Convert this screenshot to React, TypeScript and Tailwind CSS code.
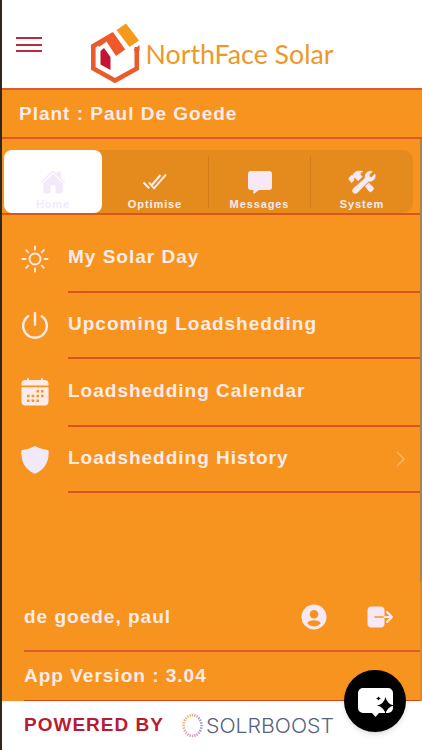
import type { ReactNode } from 'react'
import clsx from 'clsx'

interface IconProps {
  className?: string
}

const Logo = () => (
  <svg className="mt-[22px] ml-[46px] h-[62px] w-[270px] tracking-normal" viewBox="0 0 270 62">
    <path d="M25 12.500 L5.300 24 V46.500 L27 58.500 L48.800 46.500 V25" fill="none" stroke="#e95b2b" strokeWidth="4.600" />
    <path d="M10 22 L25 10 L37.200 27.500 L28 34 L18.500 19.500 L11 25 Z" fill="#f05a28" />
    <path d="M12.500 29 L16 26 L22.500 35 V48 L12.500 42.500 Z" fill="#c31432" />
    <path d="M46 27.500 L51.500 23 V29 H46 Z" fill="#e95b2b" />
    <path d="M28.500 8 L38 1.500 L51 18.500 L41.500 25 Z" fill="#f79a1c" />
    <text x="57.500" y="42" textLength="188" lengthAdjust="spacingAndGlyphs" fontFamily="Lato, sans-serif" fontWeight="400" fontSize="26.500" fill="#ed9929">
      NorthFace Solar
    </text>
  </svg>
)

const HomeIcon = ({ className }: IconProps) => (
  <svg className={className} viewBox="0 0 512 512" fill="currentColor">
    <path d="M261.600 101.100a8 8 0 0 0-11 0L66.400 277.200a8 8 0 0 0-2.400 5.700L64 448a32 32 0 0 0 32 32h96a16 16 0 0 0 16-16V328a8 8 0 0 1 8-8h80a8 8 0 0 1 8 8v136a16 16 0 0 0 16 16h96a32 32 0 0 0 32-32V282.900a8 8 0 0 0-2.500-5.700Z" />
    <path d="m491 244-75-71.600V64a16 16 0 0 0-16-16h-48a16 16 0 0 0-16 16v32l-57.900-55.400C272.800 35.100 264.700 32 256 32s-16.700 3.100-22.100 8.600L21.200 244c-6.200 6-7 15.900-1.200 22.200a16 16 0 0 0 22.700.6L250.500 68.200a8 8 0 0 1 11 0l207.900 198.700a16 16 0 0 0 22.600-.5c6.100-6.300 5.600-16.300-1-22.400Z" />
  </svg>
)

const DoubleCheckIcon = ({ className }: IconProps) => (
  <svg className={className} viewBox="0 0 26 20" fill="none" stroke="currentColor" strokeWidth="2">
    <path d="m1.500 10.500 5.700 5.800M9.500 13.500l9-10.500M7 10.500l5 5.800L24 2.500" />
  </svg>
)

const ChatIcon = ({ className }: IconProps) => (
  <svg className={className} viewBox="0 0 26 26" fill="currentColor">
    <path d="M4 2h18a3 3 0 0 1 3 3v13a3 3 0 0 1-3 3H12l-4.500 3.600c-.6.500-1.200.1-1.200-.6v-3H4a3 3 0 0 1-3-3V5a3 3 0 0 1 3-3Z" />
  </svg>
)

const ToolsIcon = ({ className }: IconProps) => (
  <svg className={className} viewBox="0 0 28 24" fill="currentColor" stroke="currentColor" strokeWidth=".6" strokeLinejoin="round">
    <path d="M.5 8.800 3 5.500l1.500.3C6 1.700 10 .2 15 1.500c-2 .7-3 1.700-2.700 3.200l1.900 2-4.200 4-2.600-2.700c-1-.4-1.600.1-1.900.8l.3 1.700-2.300 2.200Z" />
    <path d="m24.300 1.500-3.200 3.300.5 2 2 .6L27 4c1 3.500-1 7.200-5 7.200-1.200 0-2 .4-2.700 1.200l-9.800 10c-1.400 1.400-3.500 1.200-4.400 0-1-1.300-.6-2.900.5-4L16.300 9c.7-.6 1-1.400.9-2.300C17 3 20.500.2 24.300 1.500Z" />
    <path d="m17.300 16.200 3.300-3.300 4.200 4.200c1 .9 1 2 .2 2.900l-1.300 1.300c-.8.8-1.900.7-2.700-.1Z" />
  </svg>
)

const SunIcon = ({ className }: IconProps) => (
  <svg className={className} viewBox="0 0 28 28" fill="none" stroke="currentColor" strokeWidth="1.900" strokeLinecap="round">
    <circle cx="14" cy="14" r="5.500" />
    <path d="M14 1.500v3M14 23.500v3M1.500 14h3M23.500 14h3M5.200 5.200l2.100 2.100M20.700 20.700l2.100 2.100M5.200 22.800l2.100-2.100M20.700 7.300l2.100-2.100" />
  </svg>
)

const PowerIcon = ({ className }: IconProps) => (
  <svg className={className} viewBox="0 0 28 28" fill="none" stroke="currentColor" strokeWidth="2.400" strokeLinecap="round">
    <path d="M20.800 5.300A11.800 11.800 0 1 1 7.200 5.300M14 2v11.800" />
  </svg>
)

const CalendarIcon = ({ className }: IconProps) => (
  <svg className={className} viewBox="0 0 28 28" fill="currentColor">
    <path d="M.500 7.500V6a4 4 0 0 1 4-4H6V1a1 1 0 0 1 2 0v1h12V1a1 1 0 0 1 2 0v1h1.500a4 4 0 0 1 4 4v1.500Z" />
    <path
      fillRule="evenodd"
      d="M.5 9.300h27v14.200a4 4 0 0 1-4 4h-19a4 4 0 0 1-4-4Zm15 2.700v2.500h2.500V12Zm4.500 0v2.500h2.500V12ZM6 16.700v2.500h2.500v-2.500Zm4.700 0v2.500h2.500v-2.500Zm4.800 0v2.500h2.500v-2.500Zm4.500 0v2.500h2.500v-2.500ZM6 21.500V24h2.500v-2.500Zm4.700 0V24h2.500v-2.500Zm4.800 0V24h2.500v-2.500Z"
    />
  </svg>
)

const ShieldIcon = ({ className }: IconProps) => (
  <svg className={className} viewBox="0 0 28 28" fill="currentColor">
    <path d="M26.500 3.900C21 3.300 18 2.300 14.800.3a1.500 1.500 0 0 0-1.600 0C10 2.300 7 3.300 1.500 3.900a1.200 1.200 0 0 0-1.100 1.200C-.1 16 4.500 23.500 13.200 27.500c.5.200 1 .2 1.500 0C23.500 23.500 28.100 16 27.600 5.100a1.200 1.200 0 0 0-1.100-1.200Z" />
  </svg>
)

const PersonIcon = ({ className }: IconProps) => (
  <svg className={className} viewBox="0 0 26 26">
    <circle cx="13" cy="13" r="12.500" fill="currentColor" />
    <circle cx="13" cy="10.300" r="4.300" fill="#f7941f" />
    <path d="M6.200 19.300c1-2.300 3.900-3 6.800-3s5.800.7 6.800 3c-1.700 2-4.100 3.100-6.800 3.100s-5.100-1.100-6.800-3.100Z" fill="#f7941f" />
  </svg>
)

const ExitIcon = ({ className }: IconProps) => (
  <svg className={className} viewBox="0 0 26 24" fill="none" strokeLinecap="round" strokeLinejoin="round">
    <rect x=".500" y="1.500" width="17" height="21" rx="4" fill="currentColor" />
    <path d="M8 12h9.500" stroke="#f7941f" strokeWidth="1.600" />
    <path d="M17.500 12H25M20 7l5 5-5 5" stroke="currentColor" strokeWidth="2" />
  </svg>
)

const ringColors = ['#a89ac8', '#c4a0ca', '#d7a8c4', '#eba9ab', '#f5b36b', '#f3bd71', '#eba9ab', '#b19ac8']

const SolrBoost = () => (
  <svg className="h-[30px] w-[170px] tracking-normal" viewBox="0 0 170 30">
    {Array.from({ length: 24 }, (_, i) => {
      const a = (i / 24) * Math.PI * 2
      return (
        <line
          key={i}
          x1={11.5 + Math.cos(a) * 7.8}
          y1={15.5 + Math.sin(a) * 9}
          x2={11.5 + Math.cos(a) * 10.3}
          y2={15.5 + Math.sin(a) * 11.8}
          stroke={ringColors[Math.floor(i / 3)]}
          strokeWidth="1.500"
        />
      )
    })}
    <text x="25" y="23" textLength="128" lengthAdjust="spacingAndGlyphs" fontFamily="Inter, sans-serif" fontWeight="300" fontSize="20" fill="#56637d">
      SOLRBOOST
    </text>
  </svg>
)

interface TabProps {
  icon: ReactNode
  label: string
  className: string
}

const Tab = ({ icon, label, className }: TabProps) => (
  <div className={clsx('flex h-[63px] flex-col items-center justify-end pb-[2px]', className)}>
    {icon}
    <span className="mt-[3px] text-[11px] leading-[13px] font-bold tracking-[.9px]">{label}</span>
  </div>
)

const TabDivider = () => <div className="mt-[6px] h-[52px] w-px bg-[#d37a1b]" />

interface MenuItemProps {
  icon: ReactNode
  label: string
  className: string
  arrow?: boolean
}

const MenuItem = ({ icon, label, className, arrow }: MenuItemProps) => (
  <div className={clsx('flex items-center pl-[19px]', className)}>
    <div className="w-[47px] shrink-0">{icon}</div>
    <div className="flex h-full flex-1 items-center justify-between border-b-2 border-[#d9561a] pr-[15px]">
      <span className="pb-[2px]">{label}</span>
      {arrow && (
        <svg className="h-4 w-[9px]" viewBox="0 0 9 16" fill="none" stroke="#fab565" strokeWidth="1.500">
          <path d="m1 1 7 7-7 7" />
        </svg>
      )}
    </div>
  </div>
)

export default function App() {
  return (
    <div className="relative flex h-[750px] w-[422px] flex-col overflow-hidden border-l-2 border-[#30271f] bg-white font-['Liberation_Sans',Arial,sans-serif] text-[19px] leading-6 font-bold tracking-[1px] text-[#fdebea]">
      <header className="flex h-[88px] shrink-0 items-start">
        <div className="mt-[37px] ml-[14px] flex w-[26px] shrink-0 flex-col gap-[4.500px]">
          <span className="h-[2px] bg-[#b92b3e]" />
          <span className="h-[2px] bg-[#b92b3e]" />
          <span className="h-[2px] bg-[#b92b3e]" />
        </div>
        <Logo />
      </header>

      <div className="flex h-[51px] shrink-0 items-center border-y-2 border-[#dc5a2c] bg-[#f7941f] pl-[17px]">Plant : Paul De Goede</div>

      <main className="flex h-[562px] shrink-0 bg-[#f7941f]">
        <div className="flex w-[418px] flex-col">
          <div className="h-[76px] shrink-0 border-b-2 border-[#d9561a] pt-[11px]">
            <div className="ml-[2px] flex w-[409px] rounded-[10px] bg-[#e58b1e]">
              <Tab
                className="w-[98px] rounded-lg bg-white text-[#f2eafa]"
                label="Home"
                icon={<HomeIcon className="h-[26px] w-[26px]" />}
              />
              <Tab className="w-[106px] text-[#fdebea]" label="Optimise" icon={<DoubleCheckIcon className="mb-[3px] h-5 w-[26px]" />} />
              <TabDivider />
              <Tab className="w-[101px] text-[#f6e9f5]" label="Messages" icon={<ChatIcon className="h-[26px] w-[26px]" />} />
              <TabDivider />
              <Tab className="w-[102px] text-[#f6e9f5]" label="System" icon={<ToolsIcon className="mb-px h-6 w-7" />} />
            </div>
          </div>

          <nav className="pt-[10px]">
            <MenuItem className="h-[68px]" label="My Solar Day" icon={<SunIcon className="size-7" />} />
            <MenuItem className="h-[66px]" label="Upcoming Loadshedding" icon={<PowerIcon className="mb-[2px] size-7" />} />
            <MenuItem className="h-[68px]" label="Loadshedding Calendar" icon={<CalendarIcon className="mb-[2px] size-7" />} />
            <MenuItem className="h-[66px]" label="Loadshedding History" arrow icon={<ShieldIcon className="size-7 text-[#f2e9f8]" />} />
          </nav>

          <div className="mt-auto ml-[22px]">
            <div className="flex h-[69px] items-center border-b-2 border-[#dc5a2c]">
              <span className="flex-1">de goede, paul</span>
              <PersonIcon className="mr-[40px] h-[26px] w-[26px] text-[#f6e9f5]" />
              <ExitIcon className="mr-[27px] h-6 w-[26px] text-[#f6e9f5]" />
            </div>
            <div className="flex h-[49px] items-center border-b border-[#d4471c]">App Version : 3.04</div>
          </div>
        </div>
        <div className="flex flex-1 flex-col bg-[#df8b2b]">
          <div className="h-[443px] bg-[#a98252]" />
        </div>
      </main>

      <footer className="flex flex-1 items-center pb-px pl-[22px] text-[#b71c32]">
        <span className="w-[157px]">POWERED BY</span>
        <SolrBoost />
      </footer>

      <button className="absolute top-[670px] left-[342px] size-[62px] rounded-full bg-black shadow-md">
        <svg className="size-full" viewBox="0 0 62 62">
          <path d="M19 18h25a5 5 0 0 1 5 5v15a5 5 0 0 1-5 5H35l-3.500 4L28 43h-9a5 5 0 0 1-5-5V23a5 5 0 0 1 5-5Z" fill="#fff" />
          <path d="M41.500 27q1.500 7 8.500 8.500-7 1.500-8.500 8.500-1.500-7-8.500-8.500 7-1.500 8.500-8.500Z" fill="#000" />
          <path d="M34.500 26.500q.4 1.600 2.500 2-2.100.4-2.500 2-.4-1.600-2.500-2 2.100-.4 2.500-2Z" fill="#000" />
        </svg>
      </button>
    </div>
  )
}
